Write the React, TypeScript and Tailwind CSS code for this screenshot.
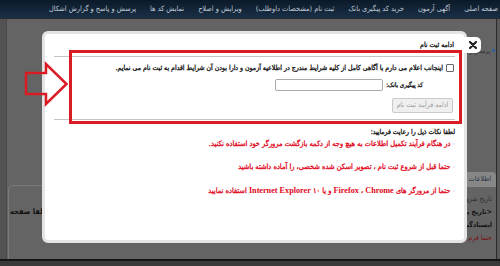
import React from "react";

const navItems = [
  "صفحه اصلی",
  "آگهی آزمون",
  "خرید کد پیگیری بانک",
  "ثبت نام (مشخصات داوطلب)",
  "ویرایش و اصلاح",
  "نمایش کد ها",
  "پرسش و پاسخ و گزارش اشکال",
];

export default function App() {
  return (
    <div className="relative w-[500px] h-[266px] overflow-hidden bg-[#646464] font-['DejaVu_Sans_Condensed','DejaVu_Sans',sans-serif]">
      {/* top navigation */}
      <nav
        dir="rtl"
        className="h-[19px] flex items-center gap-[14px] pr-[2px] bg-gradient-to-b from-[#0b1a29] to-[#1a3047] border-b border-[#2a2a2a] text-[7.3px] text-[#c2ccd8] whitespace-nowrap overflow-hidden"
      >
        {navItems.map((n) => (
          <span key={n}>{n}</span>
        ))}
      </nav>

      {/* page behind overlay */}
      <div className="flex h-[240px]">
        <div className="w-[7px] bg-[#535353] border-r border-[#484848]" />
        <div className="flex-1 flex">
          <div className="w-[200px] pt-[166px] pl-[1px]">
            <div className="h-[74px] rounded-tl-[5px] border-t border-l border-[#7a7a7a] pt-[20px] pl-[1px] text-[7.5px] font-bold text-[#111]">
              لطفا صفحه
            </div>
          </div>
          <div dir="rtl" className="flex-1 flex flex-col">
            <div className="mt-[26px] h-[10px] flex items-center gap-[2px] text-[6px] text-[#2a2a2a] pr-[1px]">
              <span className="w-[3px] h-[3px] rounded-full bg-[#2a5ea8]" />
              <span>پرسش و پاسخ</span>
            </div>
            <div className="mt-[117px] h-[15px] bg-[#878787] rounded-tr-[4px] flex items-center pr-[5px] text-[7px] text-[#1f2f3f]">
              اطلاعات داوطلب
            </div>
            <div className="pr-[4px] pt-[6px] text-[7px] leading-[13px]">
              <div className="text-[#2b2b2b]">تاریخ شروع ثبت نام</div>
              <div className="font-bold text-[#111]">&lt;تاریخ پایان ثبت نام</div>
              <div className="font-bold text-[#111]">ایستادگی در برابر</div>
              <div className="text-[#7a0c10]">حتما فرم را تکمیل کنید</div>
            </div>
          </div>
        </div>
        <div className="w-[4px] border-l border-[#2a2a2a] bg-[#595959]" />
      </div>
      <div className="h-[7px] border-t-2 border-[#161616] bg-[#3a3a3a]" />

      {/* dialog */}
      <div
        dir="rtl"
        className="absolute left-[42px] top-[31px] w-[425px] h-[212px] bg-white border-[3px] border-[#e4e4e4] rounded-[6px] [-webkit-text-stroke:0.3px]"
      >
        <div className="h-[22px] flex items-center pr-[10px] text-[6.9px] text-[#111]">
          ادامه ثبت نام
        </div>
        <div className="mx-[9px] h-[64px] border-t border-b border-[#c4c4c4] flex flex-col">
          <div className="h-[21px] flex items-center gap-[3px] pr-[1px] pt-[1px]">
            <span className="shrink-0 w-[8px] h-[8px] border border-[#666] rounded-[1px] bg-white [-webkit-text-stroke:0]" />
            <span className="text-[6.9px] text-[#111] whitespace-nowrap">
              اینجانب اعلام می دارم با آگاهی کامل از کلیه شرایط مندرج در اطلاعیه آزمون و دارا بودن آن شرایط اقدام به ثبت نام می نمایم.
            </span>
          </div>
          <div className="h-[13px] flex items-center gap-[3px] pr-[32px]">
            <span className="shrink-0 text-[6.3px] text-[#111]">کد پیگیری بانک:</span>
            <span className="shrink-0 w-[108px] h-[12px] border border-[#a9a9a9] rounded-[2px] bg-white" />
          </div>
          <div className="mt-[7px] pr-[2px] flex">
            <span className="w-[61px] h-[15px] flex items-center justify-center bg-[#efefef] border border-[#c9c9c9] rounded-[2px] text-[7px] text-[#9a9a9a] [-webkit-text-stroke:0]">
              ادامه فرآیند ثبت نام
            </span>
          </div>
        </div>
        <div className="pr-[9px] pt-[6px] text-[7.4px]">
          <div className="h-[12px] leading-[12px] text-[#111] text-[6.8px]">
            لطفا نکات ذیل را رعایت فرمایید:
          </div>
          <div className="h-[12px] leading-[12px] text-[#e1061b]">
            <span className="text-[#b5b5b5] [-webkit-text-stroke:0]">- </span>
            در هنگام فرآیند تکمیل اطلاعات به هیچ وجه از دکمه بازگشت مرورگر خود استفاده نکنید.
          </div>
          <div className="mt-[11px] h-[12px] leading-[12px] text-[#e1061b]">
            <span className="text-[#b5b5b5] [-webkit-text-stroke:0]">- </span>
            حتما قبل از شروع ثبت نام ، تصویر اسکن شده شخصی، را آماده داشته باشید
          </div>
          <div className="mt-[12px] h-[12px] leading-[12px] text-[#e1061b]">
            <span className="text-[#b5b5b5] [-webkit-text-stroke:0]">- </span>
            حتما از مرورگر های{" "}
            <bdi className="font-['Liberation_Serif',serif] font-bold text-[8.2px] [-webkit-text-stroke:0]">Chrome</bdi> ،{" "}
            <bdi className="font-['Liberation_Serif',serif] font-bold text-[8.2px] [-webkit-text-stroke:0]">Firefox</bdi> و یا ۱۰{" "}
            <bdi className="font-['Liberation_Serif',serif] font-bold text-[8.2px] [-webkit-text-stroke:0]">Internet Explorer</bdi> استفاده نمایید
          </div>
        </div>
      </div>

      {/* close tab */}
      <div className="absolute left-[464px] top-[37px] w-[17px] h-[16px] bg-white rounded-r-[5px] flex items-center justify-center">
        <svg width="8" height="8" viewBox="0 0 8 8">
          <path d="M1 1 L7 7 M7 1 L1 7" stroke="#222" strokeWidth="2.2" strokeLinecap="round" />
        </svg>
      </div>

      {/* annotation: red frame */}
      <div className="absolute left-[69px] top-[50px] w-[393px] h-[74px] border-[3px] border-[#d91c24]" />

      {/* annotation: arrow */}
      <svg className="absolute left-[22px] top-[61px]" width="48" height="46" viewBox="0 0 48 46">
        <polygon
          points="4,12 24,12 24,3 44.5,23 24,43 24,33 4,33"
          fill="none"
          stroke="#d91c24"
          strokeWidth="2.5"
        />
      </svg>
    </div>
  );
}
